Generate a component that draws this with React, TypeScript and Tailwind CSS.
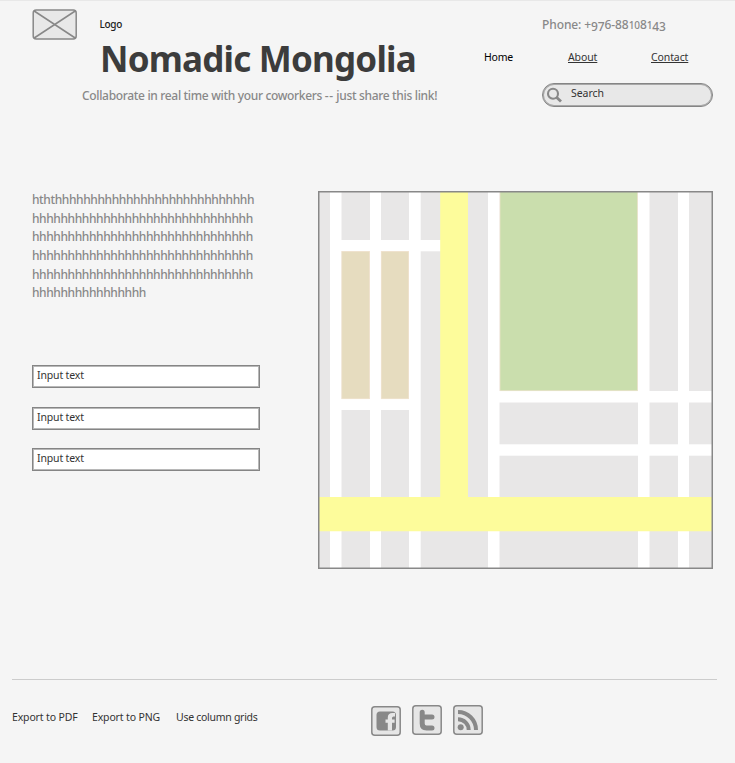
import type { ReactNode } from 'react';

function PlaceholderImage() {
  return (
    <svg width="45" height="31" viewBox="0 0 45 31" fill="none" stroke="#888" strokeWidth="1.5">
      <rect x="1.2" y="1" width="43" height="29" rx="3" fill="#e8e8e8" />
      <path d="M2.2 2 L43.2 29 M43.2 2 L2.2 29" />
    </svg>
  );
}

function CityMap() {
  return (
    <svg width="395" height="378" viewBox="318 191 395 378" className="shrink-0">
      <rect x="318" y="191" width="395" height="378" fill="#e8e7e7" />
      <g fill="#fff">
        <rect x="330" y="191" width="11.5" height="378" />
        <rect x="370" y="191" width="11" height="378" />
        <rect x="409" y="191" width="11.7" height="378" />
        <rect x="488" y="191" width="11.5" height="378" />
        <rect x="638" y="191" width="11.5" height="378" />
        <rect x="678" y="191" width="11" height="378" />
        <rect x="330" y="240" width="111" height="11.3" />
        <rect x="330" y="399" width="90" height="11" />
        <rect x="488" y="391" width="225" height="11.5" />
        <rect x="488" y="444.3" width="225" height="11.4" />
      </g>
      <g stroke="#f3e3cf" strokeWidth=".6">
        <rect x="341.8" y="251.3" width="27.8" height="147.5" fill="#e6dcbf" />
        <rect x="381.2" y="251.3" width="27.5" height="147.5" fill="#e6dcbf" />
        <rect x="500" y="191" width="137.6" height="199.8" fill="#cadead" />
      </g>
      <path d="M440.2 191 H468 V497 H713 V531.2 H318 V497 H440.2 Z" fill="#fdfc9b" />
      <rect x="318.75" y="191.75" width="393.5" height="376.5" fill="none" stroke="#888" strokeWidth="1.5" />
    </svg>
  );
}

function SocialIcon({ children }: { children: ReactNode }) {
  return (
    <svg width="30" height="30" viewBox="0 0 30 30" fill="#888">
      <rect x=".8" y=".8" width="28.4" height="28.4" rx="3" fill="#e6e6e6" stroke="#888" strokeWidth="1.5" />
      {children}
    </svg>
  );
}

function Field({ className }: { className: string }) {
  return (
    <div className={`h-[23px] w-[228px] border border-[#858585] bg-white pl-1 text-[10.5px] leading-[18px] tracking-[-0.15px] shadow-[inset_0_0_0_1px_#b8b8b8] ${className}`}>
      Input text
    </div>
  );
}

export default function App() {
  return (
    <div className="h-[763px] w-[735px] overflow-hidden border-t border-[#e8e8e8] bg-[#f5f5f5] font-['Noto_Sans',sans-serif] whitespace-nowrap text-[#333]">
      <header className="flex h-[190px] pl-8">
        <div className="w-[452px] pt-2">
          <div className="flex h-[31px] items-center gap-[22.5px]">
            <PlaceholderImage />
            <span className="text-[10px] font-medium tracking-[-0.3px] text-[#222]">Logo</span>
          </div>
          <h1 className="ml-[68px] h-[41px] text-[35px] leading-[38px] font-bold tracking-[-0.8px] text-[#3c3c3c]">
            Nomadic Mongolia
          </h1>
          <p className="mt-[7px] ml-[50px] text-[12px] leading-4 font-medium tracking-[-0.33px] text-[#888]">
            Collaborate in real time with your coworkers <span className="tracking-[0.5px]">--</span> just share this link!
          </p>
        </div>
        <div className="w-[229px] pt-4">
          <p className="ml-[58px] h-4 text-[12px] leading-4 font-medium tracking-[-0.1px] text-[#888]">
            <span>Phone: +</span>
            <span className="relative top-[2px]">97</span>6-88
            <span className="text-[10px]">10</span>8<span className="text-[10px]">1</span>
            <span className="relative top-[2px]">43</span>
          </p>
          <nav className="mt-4 flex h-4 text-[10.5px] leading-4 tracking-[-0.1px]">
            <a className="w-[84px] tracking-[-0.2px] text-black">Home</a>
            <a className="w-[83px] underline">About</a>
            <a className="underline">Contact</a>
          </nav>
          <div className="mt-[18px] ml-[58px] flex h-6 w-[171px] rounded-[12px] border border-[#858585] bg-[#e8e8e8] pl-[3px] shadow-[inset_0_0_0_1px_#a8a8a8]">
            <svg width="18" height="20" viewBox="0 0 18 20" fill="none" stroke="#888">
              <circle cx="7" cy="9.7" r="5" strokeWidth="2.1" />
              <path d="M10.5 13.2 L15 17.5" strokeWidth="2.8" />
            </svg>
            <span className="ml-[7px] text-[10.5px] leading-[19px] tracking-[-0.05px]">Search</span>
          </div>
        </div>
      </header>

      <main className="flex h-[488px] pl-8">
        <section className="w-[286px]">
          <p className="text-[12px] leading-[18.65px] font-medium tracking-[-0.4px] text-[#888]">
            hththhhhhhhhhhhhhhhhhhhhhhhhhhhh<br />
            hhhhhhhhhhhhhhhhhhhhhhhhhhhhhhh<br />
            hhhhhhhhhhhhhhhhhhhhhhhhhhhhhhh<br />
            hhhhhhhhhhhhhhhhhhhhhhhhhhhhhhh<br />
            hhhhhhhhhhhhhhhhhhhhhhhhhhhhhhh<br />
            hhhhhhhhhhhhhhhh
          </p>
          <Field className="mt-[62px]" />
          <Field className="mt-[19px]" />
          <Field className="mt-[18px]" />
        </section>
        <CityMap />
      </main>

      <footer className="ml-3 flex w-[705px] border-t border-[#ccc]">
        <div className="flex w-[359px] pt-[29px] text-[10.5px] leading-4 tracking-[-0.15px]">
          <span className="w-20">Export to PDF</span>
          <span className="w-[84px]">Export to PNG</span>
          <span className="tracking-[-0.28px]">Use column grids</span>
        </div>
        <div className="flex gap-[11px] pt-[25px]">
          <div className="pt-px">
            <SocialIcon>
              <rect x="5.5" y="5.5" width="19.5" height="19" rx="3.5" />
              <path d="M24 7 H21.5 Q16.8 7 16.8 11.5 V13.5 H14.5 V16.8 H16.8 V24.5 H21 V16.8 H23.6 V13.5 H21 V12 Q21 10.5 22.5 10.5 H24 Z" fill="#e6e6e6" />
            </SocialIcon>
          </div>
          <SocialIcon>
            <path d="M10.2 7.2 V18.5 Q10.2 22.9 14.5 22.9 H20 M10.2 11.9 H20" fill="none" stroke="#888" strokeWidth="5" strokeLinecap="round" />
          </SocialIcon>
          <SocialIcon>
            <circle cx="7.7" cy="22.3" r="3" />
            <path d="M5 14.3 A10.7 10.7 0 0 1 15.7 25 M5 7 A18 18 0 0 1 23 25" fill="none" stroke="#888" strokeWidth="4" />
          </SocialIcon>
        </div>
      </footer>
    </div>
  );
}
